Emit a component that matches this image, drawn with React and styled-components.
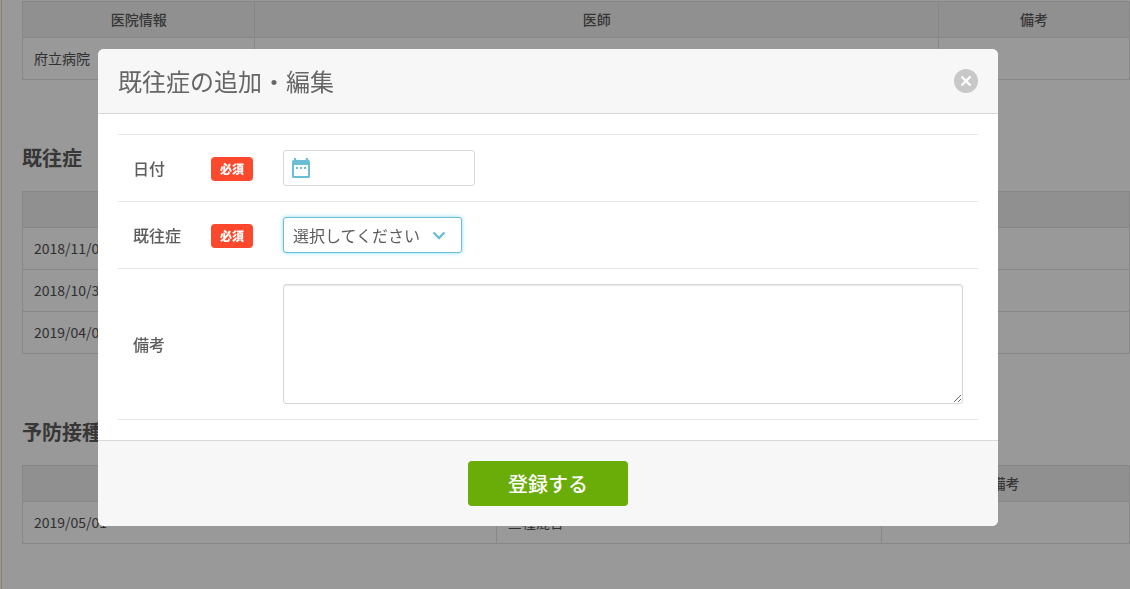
import React, { useState } from "react";
import styled, { createGlobalStyle } from "styled-components";

const clinics = [{ name: "府立病院", doctor: "", note: "" }];

const histories = [
    { date: "2018/11/01", note: "" },
    { date: "2018/10/31", note: "" },
    { date: "2019/04/01", note: "" },
];

const vaccines = [{ date: "2019/05/01", name: "三種混合", note: "" }];

function HistoryModal() {
    const [date, setDate] = useState("");
    const [disease, setDisease] = useState("");
    const [note, setNote] = useState("");

    return (
        <Overlay>
            <Modal role="dialog" aria-labelledby="modal-title">
                <ModalHeader>
                    <ModalTitle id="modal-title">既往症の追加・編集</ModalTitle>
                    <CloseButton type="button" aria-label="閉じる">
                        <svg viewBox="0 0 24 24" width="24" height="24">
                            <path
                                d="M7.500 7.500l9 9M16.500 7.500l-9 9"
                                stroke="#fff"
                                strokeWidth="2.4"
                                fill="none"
                            />
                        </svg>
                    </CloseButton>
                </ModalHeader>
                <ModalBody>
                    <FormRow>
                        <LabelCell>
                            <Label htmlFor="date">日付</Label>
                            <Required>必須</Required>
                        </LabelCell>
                        <FieldCell>
                            <DateBox>
                                <CalendarIcon viewBox="0 0 20 20">
                                    <path
                                        fillRule="evenodd"
                                        d="M3 0h2.200v2h9.600V0H17v2h.5A1.500 1.500 0 0 1 19 3.500v15a1.500 1.500 0 0 1-1.500 1.500h-15A1.500 1.500 0 0 1 1 18.500v-15A1.500 1.500 0 0 1 2.500 2H3zM3 7v11h14V7z"
                                    />
                                    <path d="M5 9h2v2H5zM9 9h2v2H9zM13 9h2v2h-2z" />
                                </CalendarIcon>
                                <DateInput
                                    id="date"
                                    type="text"
                                    value={date}
                                    onChange={(e) => setDate(e.target.value)}
                                />
                            </DateBox>
                        </FieldCell>
                    </FormRow>
                    <FormRow>
                        <LabelCell>
                            <Label htmlFor="disease">既往症</Label>
                            <Required>必須</Required>
                        </LabelCell>
                        <FieldCell>
                            <SelectBox>
                                <Select
                                    id="disease"
                                    value={disease}
                                    onChange={(e) => setDisease(e.target.value)}
                                >
                                    <option value="">選択してください</option>
                                </Select>
                                <Chevron viewBox="0 0 14 14">
                                    <path d="M1.500 4.500L7 10l5.500-5.500" />
                                </Chevron>
                            </SelectBox>
                        </FieldCell>
                    </FormRow>
                    <FormRow>
                        <LabelCell>
                            <Label htmlFor="note">備考</Label>
                        </LabelCell>
                        <FieldCell>
                            <TextArea
                                id="note"
                                value={note}
                                onChange={(e) => setNote(e.target.value)}
                            />
                        </FieldCell>
                    </FormRow>
                </ModalBody>
                <ModalFooter>
                    <SubmitButton type="button">登録する</SubmitButton>
                </ModalFooter>
            </Modal>
        </Overlay>
    );
}

function App() {
    return (
        <>
            <GlobalStyle />
            <Page>
                <Section>
                    <Table>
                        <thead>
                            <tr>
                                <Th $width="21%">医院情報</Th>
                                <Th>医師</Th>
                                <Th $width="17.25%">備考</Th>
                            </tr>
                        </thead>
                        <tbody>
                            {clinics.map((item) => (
                                <tr key={item.name}>
                                    <Td>{item.name}</Td>
                                    <Td>{item.doctor}</Td>
                                    <Td>{item.note}</Td>
                                </tr>
                            ))}
                        </tbody>
                    </Table>
                </Section>
                <Section>
                    <Heading>既往症</Heading>
                    <Table>
                        <thead>
                            <tr>
                                <Th $width="42.8%">日付</Th>
                                <Th>備考</Th>
                            </tr>
                        </thead>
                        <tbody>
                            {histories.map((item) => (
                                <tr key={item.date}>
                                    <Td>{item.date}</Td>
                                    <Td>{item.note}</Td>
                                </tr>
                            ))}
                        </tbody>
                    </Table>
                </Section>
                <Section>
                    <Heading>予防接種</Heading>
                    <Table>
                        <thead>
                            <tr>
                                <Th $width="42.8%">日付</Th>
                                <Th>予防接種</Th>
                                <Th $width="22.4%">備考</Th>
                            </tr>
                        </thead>
                        <tbody>
                            {vaccines.map((item) => (
                                <tr key={item.date}>
                                    <Td>{item.date}</Td>
                                    <Td>{item.name}</Td>
                                    <Td>{item.note}</Td>
                                </tr>
                            ))}
                        </tbody>
                    </Table>
                </Section>
            </Page>
            <HistoryModal />
        </>
    );
}

export default App;

const GlobalStyle = createGlobalStyle`
    * {
        box-sizing: border-box;
    }
    body {
        margin: 0;
        background-color: #fff;
        color: #5c5c5c;
        font-family: "Noto Sans CJK JP", sans-serif;
        font-size: 14px;
    }
    input, select, textarea, button {
        font-family: inherit;
        color: inherit;
    }
`;
const Page = styled.main`
    min-height: 100vh;
    margin-left: 1px;
    padding-left: 20px;
    border-left: 1px solid #ecd8b8;
`;
const Section = styled.section`
    padding-top: 1px;
    margin-bottom: 62px;
`;
const Heading = styled.h2`
    margin: 0 0 18px;
    font-size: 20px;
    font-weight: 700;
    line-height: 30px;
`;
const Table = styled.table`
    width: 100%;
    border-collapse: collapse;
    table-layout: fixed;
`;
const Th = styled.th`
    width: ${(props) => props.$width || "auto"};
    height: 36px;
    padding: 0 11px 2px;
    border: 1px solid #e2e2e2;
    background-color: #f0f0f0;
    font-weight: 500;
    line-height: 20px;
`;
const Td = styled.td`
    height: 42px;
    padding: 0 11px 2px;
    border: 1px solid #e2e2e2;
    color: #505050;
    line-height: 20px;
`;
const Overlay = styled.div`
    position: fixed;
    inset: 0;
    display: flex;
    justify-content: center;
    align-items: flex-start;
    padding: 49px 34px 0 0;
    background-color: rgba(0, 0, 0, 0.4);
`;
const Modal = styled.div`
    width: 100%;
    max-width: 900px;
    border-radius: 6px;
    background-color: #fff;
    overflow: hidden;
`;
const ModalHeader = styled.div`
    display: flex;
    justify-content: space-between;
    align-items: center;
    padding: 14px 20px;
    border-bottom: 1px solid #d8d8d8;
    background-color: #f7f7f7;
`;
const ModalTitle = styled.h1`
    margin: 0;
    color: #666;
    font-size: 24px;
    font-weight: 400;
    line-height: 36px;
`;
const CloseButton = styled.button`
    width: 24px;
    height: 24px;
    padding: 0;
    border: none;
    border-radius: 50%;
    background-color: #c8c8c8;
    cursor: pointer;
    svg {
        display: block;
    }
`;
const ModalBody = styled.div`
    padding: 20px;
`;
const FormRow = styled.div`
    display: grid;
    grid-template-columns: 150px 1fr;
    border-bottom: 1px solid #e8e8e8;
    &:first-child {
        border-top: 1px solid #e8e8e8;
    }
`;
const LabelCell = styled.div`
    display: flex;
    justify-content: space-between;
    align-items: center;
    padding: 16px 15px 15px;
`;
const Label = styled.label`
    padding-bottom: 2px;
    font-size: 16px;
    font-weight: 500;
    line-height: 24px;
`;
const Required = styled.span`
    padding: 0 9px;
    border-radius: 4px;
    background-color: #fc492d;
    color: #fff;
    font-size: 12px;
    font-weight: 900;
    line-height: 24px;
`;
const FieldCell = styled.div`
    padding: 15px;
`;
const DateBox = styled.div`
    position: relative;
    width: 192px;
`;
const CalendarIcon = styled.svg`
    position: absolute;
    top: 8px;
    left: 8px;
    width: 20px;
    height: 20px;
    fill: #6bbfd4;
    pointer-events: none;
`;
const DateInput = styled.input`
    display: block;
    width: 100%;
    height: 36px;
    padding: 0 10px 0 36px;
    border: 1px solid #d8d8d8;
    border-radius: 3px;
    background-color: #fff;
    font-size: 16px;
`;
const SelectBox = styled.div`
    position: relative;
    width: 179px;
`;
const Select = styled.select`
    display: block;
    width: 100%;
    height: 36px;
    padding: 0 36px 0 9px;
    border: 1px solid #6bbfd4;
    border-radius: 3px;
    background-color: #fff;
    box-shadow: 0 0 4px #8fdcf2;
    font-size: 16px;
    appearance: none;
`;
const Chevron = styled.svg`
    position: absolute;
    top: 11px;
    right: 16px;
    width: 14px;
    height: 14px;
    fill: none;
    stroke: #6bbfd4;
    stroke-width: 2.4;
    pointer-events: none;
`;
const TextArea = styled.textarea`
    display: block;
    width: 100%;
    height: 120px;
    padding: 10px;
    border: 1px solid #d8d8d8;
    border-radius: 3px;
    background-color: #fff;
    box-shadow: inset 0 1px 1px rgba(0, 0, 0, 0.1);
    font-size: 16px;
    resize: vertical;
`;
const ModalFooter = styled.div`
    display: flex;
    justify-content: center;
    padding: 20px;
    border-top: 1px solid #d8d8d8;
    background-color: #f7f7f7;
`;
const SubmitButton = styled.button`
    width: 160px;
    height: 45px;
    padding: 0;
    border: none;
    border-radius: 4px;
    background-color: #6aad08;
    color: #fff;
    font-size: 20px;
    font-weight: 500;
    cursor: pointer;
`;
